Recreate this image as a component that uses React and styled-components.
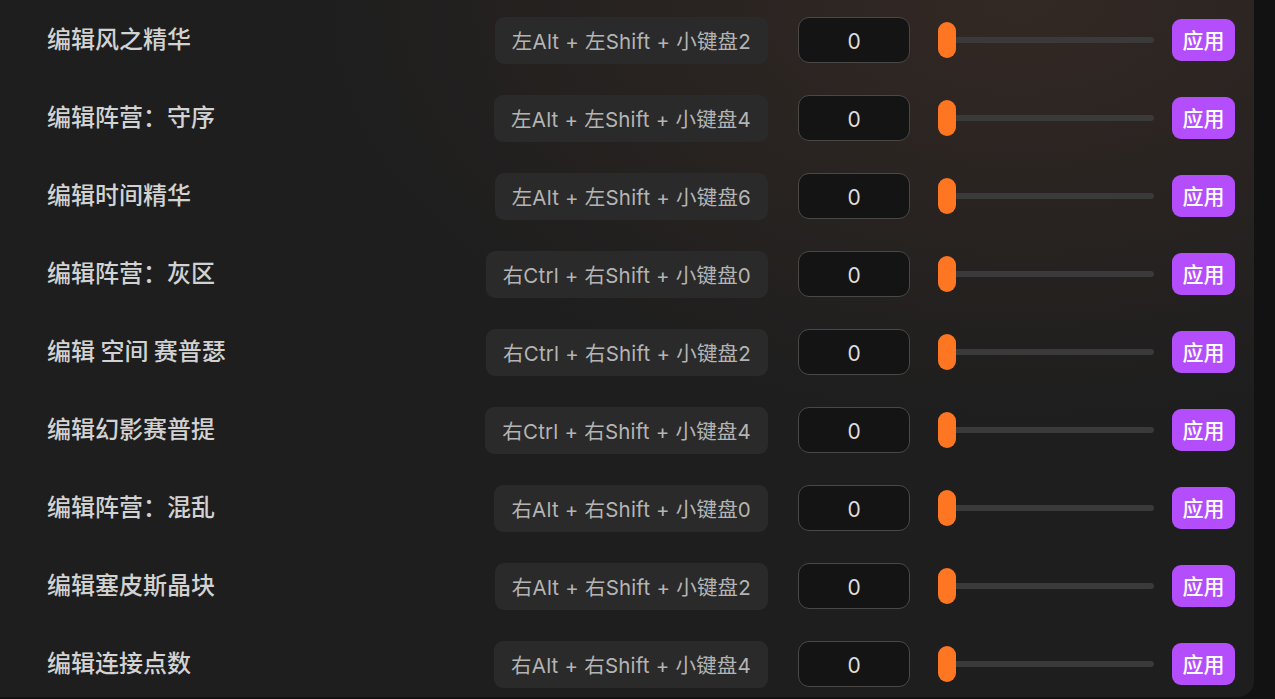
import React from 'react';
import styled, { createGlobalStyle } from 'styled-components';

const GlobalStyle = createGlobalStyle`
  html, body {
    margin: 0;
    padding: 0;
    background: #121212;
    overflow: hidden;
  }
  * { box-sizing: border-box; }
`;

const Page = styled.div`
  width: 1275px;
  height: 699px;
  display: flex;
  background: #121212;
  overflow: hidden;
`;

const Panel = styled.div`
  width: 1254px;
  height: 697px;
  flex-shrink: 0;
  border-bottom-right-radius: 16px;
  background:
    radial-gradient(ellipse 700px 420px at 1020px 0px, rgba(58, 44, 38, 0.75), rgba(58, 44, 38, 0) 100%),
    #1e1e1e;
  padding: 1px 19px 0 47px;
  display: flex;
  flex-direction: column;
  overflow: hidden;
  font-family: Inter, "Noto Sans CJK SC", sans-serif;
`;

const Row = styled.div`
  height: 78px;
  flex-shrink: 0;
  display: flex;
  align-items: center;
`;

const Label = styled.div`
  flex: 1;
  font-family: "Noto Sans CJK SC", sans-serif;
  font-size: 24px;
  font-weight: 500;
  color: #d2d2d2;
  margin-top: -5px;
`;

const Hotkey = styled.div`
  height: 47px;
  padding: 0 17px;
  border-radius: 9px;
  background: #2a2a2a;
  color: #b4b4b4;
  font-size: 20.5px;
  letter-spacing: 0.2px;
  display: flex;
  align-items: center;
  margin-right: 30px;
  white-space: nowrap;
`;

const ValueInput = styled.input`
  width: 112px;
  height: 46px;
  border-radius: 11px;
  border: 1.5px solid #4a4747;
  background: #141414;
  color: #dedede;
  font-family: Inter, sans-serif;
  font-size: 21px;
  text-align: center;
  padding-top: 3px;
  outline: none;
  margin-right: 28px;
`;

const Slider = styled.div`
  position: relative;
  width: 216px;
  height: 36px;
  display: flex;
  align-items: center;
  margin-right: 18px;
`;

const Track = styled.div`
  width: 100%;
  height: 6px;
  margin-left: 8px;
  border-radius: 3px;
  background: #3a3a3a;
`;

const Thumb = styled.div`
  position: absolute;
  left: 0;
  top: 0;
  width: 18px;
  height: 36px;
  border-radius: 9px;
  background: #ff7622;
`;

const ApplyButton = styled.button`
  width: 63px;
  height: 42px;
  border: none;
  border-radius: 9px;
  background: #b44dfc;
  color: #ffffff;
  font-family: "Noto Sans CJK SC", sans-serif;
  font-size: 21px;
  font-weight: 500;
  padding: 0 0 3px;
  cursor: pointer;
`;

const rows = [
  { label: '编辑风之精华', key: '左Alt + 左Shift + 小键盘2' },
  { label: '编辑阵营：守序', key: '左Alt + 左Shift + 小键盘4' },
  { label: '编辑时间精华', key: '左Alt + 左Shift + 小键盘6' },
  { label: '编辑阵营：灰区', key: '右Ctrl + 右Shift + 小键盘0' },
  { label: '编辑 空间 赛普瑟', key: '右Ctrl + 右Shift + 小键盘2' },
  { label: '编辑幻影赛普提', key: '右Ctrl + 右Shift + 小键盘4' },
  { label: '编辑阵营：混乱', key: '右Alt + 右Shift + 小键盘0' },
  { label: '编辑塞皮斯晶块', key: '右Alt + 右Shift + 小键盘2' },
  { label: '编辑连接点数', key: '右Alt + 右Shift + 小键盘4' },
];

const App = () => {
  return (
    <Page>
      <GlobalStyle />
      <Panel>
        {rows.map((r) => (
          <Row key={r.label}>
            <Label>{r.label}</Label>
            <Hotkey>{r.key}</Hotkey>
            <ValueInput type="text" defaultValue="0" />
            <Slider>
              <Track />
              <Thumb />
            </Slider>
            <ApplyButton type="button">应用</ApplyButton>
          </Row>
        ))}
      </Panel>
    </Page>
  );
};

export default App;
